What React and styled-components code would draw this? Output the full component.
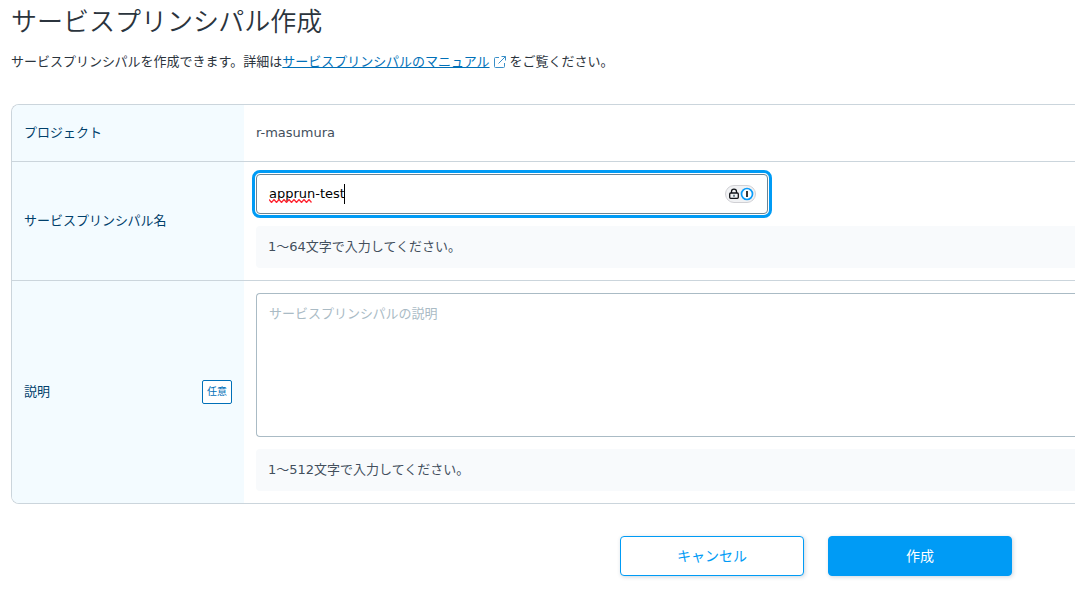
import { useState } from "react"
import styled, { createGlobalStyle } from "styled-components"

export default function App(){
    const [name, setName] = useState("apprun-test")
    const [description, setDescription] = useState("")

    function handleSubmit(event){
        event.preventDefault()
    }
    function clearForm(){
        setName("")
        setDescription("")
    }
    return(
        <PageContainer>
            <GlobalStyle />
            <Title>サービスプリンシパル作成</Title>
            <Lead>
                サービスプリンシパルを作成できます。詳細は<a href="#manual">サービスプリンシパルのマニュアル<ExternalIcon /></a>をご覧ください。
            </Lead>
            <form onSubmit={handleSubmit}>
                <Card>
                    <Row>
                        <LabelCell>プロジェクト</LabelCell>
                        <ValueCell>r-masumura</ValueCell>
                    </Row>
                    <Row>
                        <LabelCell>
                            <label htmlFor="name">サービスプリンシパル名</label>
                        </LabelCell>
                        <ValueCell>
                            <InputWrapper>
                                <TextInput
                                    id="name"
                                    type="text"
                                    autoFocus
                                    autoComplete="off"
                                    spellCheck={false}
                                    value={name}
                                    onChange={e => setName(e.target.value)}
                                />
                                {name === "apprun-test" && <SpellingMark />}
                                <PasswordBadge />
                            </InputWrapper>
                            <Hint>1〜64文字で入力してください。</Hint>
                        </ValueCell>
                    </Row>
                    <Row>
                        <LabelCell>
                            <label htmlFor="description">説明</label>
                            <Optional>任意</Optional>
                        </LabelCell>
                        <ValueCell>
                            <TextArea
                                id="description"
                                placeholder="サービスプリンシパルの説明"
                                value={description}
                                onChange={e => setDescription(e.target.value)}
                            />
                            <Hint>1〜512文字で入力してください。</Hint>
                        </ValueCell>
                    </Row>
                </Card>
                <Actions>
                    <Button type="button" onClick={clearForm}>キャンセル</Button>
                    <Button type="submit" $primary>作成</Button>
                </Actions>
            </form>
        </PageContainer>
    )
}

function ExternalIcon(){
    return(
        <svg width="12" height="12" viewBox="0 0 12 12" fill="none" stroke="#3a8fc8" aria-hidden="true">
            <path d="M5 1.5H1.5a1 1 0 0 0-1 1v8a1 1 0 0 0 1 1h8a1 1 0 0 0 1-1V7" />
            <path d="M7.5.5h4v4M11.5.5l-7 7" />
        </svg>
    )
}

function SpellingMark(){
    return(
        <>
            <Squiggle width="46" height="4" viewBox="0 0 46 4" fill="none" stroke="#ff2a36" strokeWidth="1.3" aria-hidden="true">
                <path d="M0 .5l2.5 3 2.5-3 2.5 3 2.5-3 2.5 3 2.5-3 2.5 3 2.5-3 2.5 3 2.5-3 2.5 3 2.5-3 2.5 3 2.5-3 2.5 3 2.5-3 2.5 3" />
            </Squiggle>
            <Caret />
        </>
    )
}

function PasswordBadge(){
    return(
        <Badge width="31" height="18" viewBox="0 0 31 18" fill="none" aria-hidden="true">
            <rect x=".5" y=".5" width="30" height="17" rx="8.5" fill="#f1f2f4" stroke="#d0d0d4" />
            <path d="M6.5 8V6.6a2.5 2.5 0 0 1 5 0V8" stroke="#111318" strokeWidth="1.3" />
            <rect x="4.7" y="8" width="8.6" height="5.3" rx="1" fill="#f1f2f4" stroke="#111318" strokeWidth="1.3" />
            <path d="M9 9.7v2" stroke="#3b5560" strokeWidth="1.4" />
            <circle cx="22" cy="9" r="5.5" fill="#fff" stroke="#0a9bf8" strokeWidth="1.7" />
            <path d="M22 6v6" stroke="#222" strokeWidth="1.8" />
        </Badge>
    )
}

const GlobalStyle = createGlobalStyle`
    *{
        box-sizing: border-box;
    }
    body{
        margin: 0;
        background-color: white;
        color: #2b343d;
        font-size: 13px;
        line-height: 20px;
    }
    body, button, input, textarea{
        font-family: "DejaVu Sans", "Noto Sans CJK JP", sans-serif;
    }
`
const PageContainer = styled.main`
    padding: 4px 0 24px 11px;
`
const Title = styled.h1`
    margin: 0 0 12px;
    font-size: 26px;
    font-weight: 350;
    line-height: 36px;
`
const Lead = styled.p`
    margin: 0 0 32px;

    a{
        color: #0070b8;
    }
    svg{
        margin: 0 4px;
        vertical-align: -2px;
    }
`
const Card = styled.div`
    border: 1px solid #cbd5dc;
    border-right: none;
    border-radius: 8px 0 0 8px;
    overflow: hidden;
`
const Row = styled.div`
    display: grid;
    grid-template-columns: 232px 1fr;
    min-height: 56px;

    & + &{
        border-top: 1px solid #cbd5dc;
    }
`
const LabelCell = styled.div`
    display: flex;
    align-items: center;
    justify-content: space-between;
    padding: 12px;
    background-color: #f3fbff;
    color: #00406b;
`
const ValueCell = styled.div`
    display: flex;
    flex-direction: column;
    justify-content: center;
    gap: 12px;
    padding: 12px 0 12px 12px;
    color: #434f5c;
`
const Optional = styled.span`
    padding: 0 4px;
    border: 1px solid #0070b8;
    border-radius: 2px;
    background-color: white;
    color: #0070b8;
    font-size: 10px;
    line-height: 22px;
`
const InputWrapper = styled.div`
    position: relative;
    width: 100%;
    max-width: 512px;
`
const TextInput = styled.input`
    display: block;
    width: 100%;
    height: 40px;
    padding: 0 48px 2px 12px;
    border: 1px solid #6c8594;
    border-radius: 4px;
    background-color: white;
    color: black;
    font-size: 13px;
    caret-color: transparent;

    &:focus{
        outline: 3px solid #009bf5;
        outline-offset: 1px;
    }
`
const Squiggle = styled.svg`
    position: absolute;
    left: 13px;
    top: 25px;
`
const Caret = styled.span`
    position: absolute;
    left: 88px;
    top: 10px;
    width: 1px;
    height: 20px;
    background-color: black;
`
const Badge = styled.svg`
    position: absolute;
    right: 12px;
    top: 11px;
`
const TextArea = styled.textarea`
    display: block;
    width: 100%;
    height: 144px;
    padding: 10px 12px;
    border: 1px solid #aabbc5;
    border-right: none;
    border-radius: 4px 0 0 4px;
    color: black;
    font-size: 13px;
    line-height: 20px;
    resize: none;

    &::placeholder{
        color: #aabbc5;
    }
`
const Hint = styled.div`
    padding: 11px 12px;
    border-radius: 4px 0 0 4px;
    background-color: #f8fafc;
`
const Actions = styled.div`
    display: flex;
    justify-content: flex-end;
    gap: 24px;
    padding: 32px 63px 0 0;
`
const Button = styled.button`
    width: 184px;
    height: 40px;
    padding: 0 0 2px;
    border: 1px solid #009bf5;
    border-radius: 4px;
    background-color: ${props => props.$primary ? "#009bf5" : "white"};
    color: ${props => props.$primary ? "white" : "#009bf5"};
    box-shadow: 1px 1px 4px rgba(0, 50, 90, 0.2);
    font-size: 14px;
    cursor: pointer;
`
